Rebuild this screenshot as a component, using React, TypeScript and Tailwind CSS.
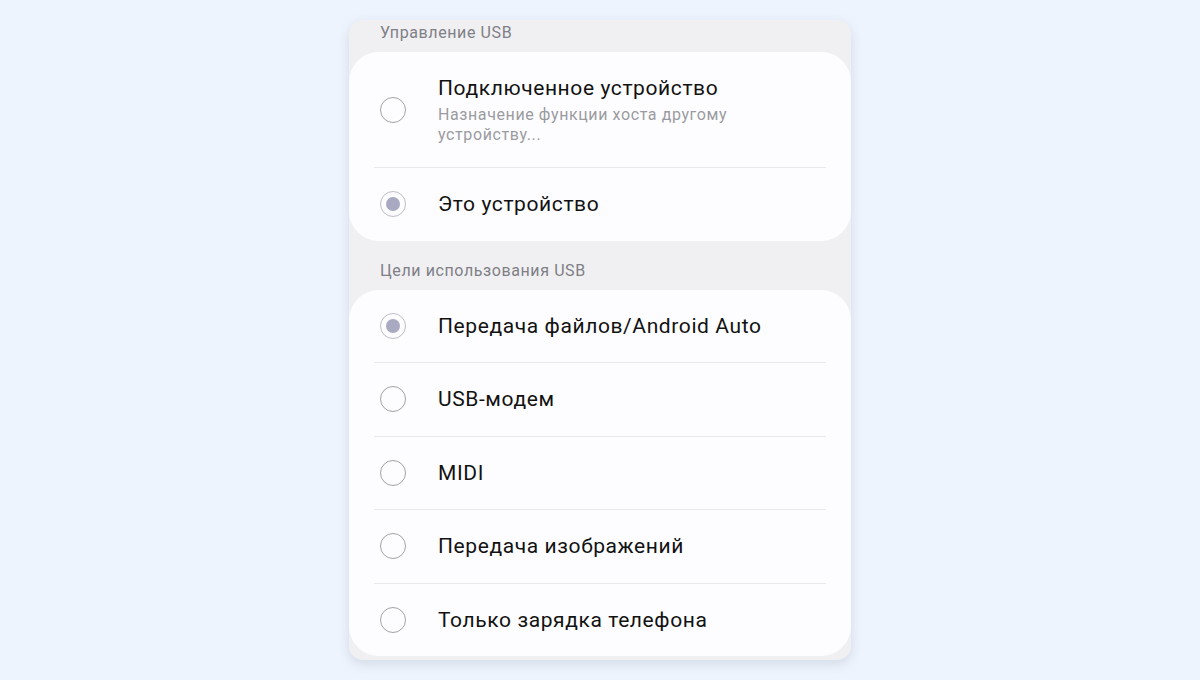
import React from 'react';

interface Option {
  id: string;
  title: string;
  subtitle?: string;
  checked?: boolean;
}

const controlOptions: Option[] = [
  { id: 'host', title: 'Подключенное устройство', subtitle: 'Назначение функции хоста другому устройству...' },
  { id: 'self', title: 'Это устройство', checked: true },
];

const usageOptions: Option[] = [
  { id: 'mtp', title: 'Передача файлов/Android Auto', checked: true },
  { id: 'modem', title: 'USB-модем' },
  { id: 'midi', title: 'MIDI' },
  { id: 'ptp', title: 'Передача изображений' },
  { id: 'charge', title: 'Только зарядка телефона' },
];

function Radio({ checked }: { checked?: boolean }) {
  if (checked) {
    return (
      <div className="w-[26px] h-[26px] shrink-0 rounded-full border-[1.5px] border-[#bdbdc6] flex items-center justify-center">
        <div className="w-[14px] h-[14px] rounded-full bg-[#a9a9c2]" />
      </div>
    );
  }
  return <div className="w-[26px] h-[26px] shrink-0 rounded-full border-[1.5px] border-[#a3a3a6]" />;
}

function Row({ option }: { option: Option }) {
  return (
    <div className={`flex items-center pl-[31px] pr-[25px] ${option.subtitle ? 'pt-[23px] pb-[22px]' : 'h-[72.5px]'}`}>
      <Radio checked={option.checked} />
      <div className="ml-[32px] flex-1">
        <p className="text-[21px] leading-[26px] tracking-[0.6px] text-[#121212]">{option.title}</p>
        {option.subtitle && (
          <p className="mt-[4px] max-w-[310px] text-[16px] leading-[20px] tracking-[0.6px] text-[#9b9b9f]">{option.subtitle}</p>
        )}
      </div>
    </div>
  );
}

function Section({ options }: { options: Option[] }) {
  return (
    <div className="bg-[#fdfdff] rounded-[30px]">
      {options.map((opt, i) => (
        <div key={opt.id}>
          {i > 0 && <div className="mx-[25px] h-px bg-[#e9e9ec]" />}
          <Row option={opt} />
        </div>
      ))}
    </div>
  );
}

export default function App() {
  return (
    <div className="w-[1200px] h-[680px] bg-[#eef4fd] pt-[20px] font-['Roboto',sans-serif]">
      <div className="w-[502px] mx-auto rounded-[14px] bg-[#f0f0f3] pb-[4px] shadow-[0_4px_12px_rgba(60,70,90,0.14)]">
        <p className="pl-[31px] pt-[3px] pb-[9px] text-[16px] leading-[20px] tracking-[0.6px] text-[#7f7f85]">Управление USB</p>
        <Section options={controlOptions} />
        <p className="pl-[31px] pt-[20px] pb-[9px] text-[16px] leading-[20px] tracking-[0.6px] text-[#7f7f85]">Цели использования USB</p>
        <Section options={usageOptions} />
      </div>
    </div>
  );
}
